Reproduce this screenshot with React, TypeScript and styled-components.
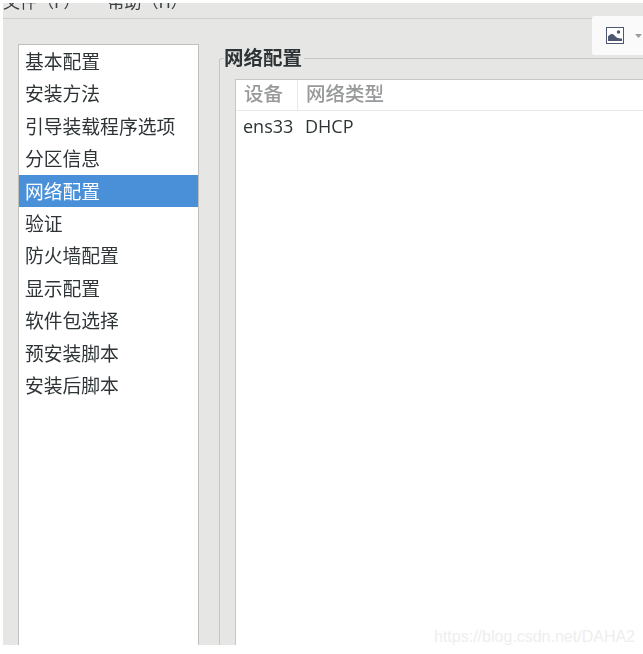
import React from "react";
import styled, { createGlobalStyle } from "styled-components";

const GlobalStyle = createGlobalStyle`
  html, body {
    margin: 0;
    padding: 0;
    background: #fff;
  }
  body {
    font-family: "Noto Sans CJK SC", "Noto Sans", sans-serif;
    color: #2e3436;
  }
`;

const Page = styled.div`
  position: relative;
  width: 643px;
  height: 654px;
  overflow: hidden;
  background: #fff;
`;

const Window = styled.div`
  position: relative;
  display: flex;
  flex-direction: column;
  margin: 3px 0 0 3px;
  width: 640px;
  height: 642px;
  overflow: hidden;
  background: #e6e6e4;
  filter: blur(0.4px);
`;

const MenuBar = styled.div`
  display: flex;
  align-items: flex-end;
  flex-shrink: 0;
  gap: 27px;
  height: 15px;
  border-bottom: 1px solid #cfcfcc;
  overflow: hidden;
`;

const MenuItem = styled.span`
  font-size: 17px;
  line-height: 22px;
  margin-bottom: 6px;
  white-space: nowrap;
  color: #3a3f41;
`;

const ImageButton = styled.div`
  position: absolute;
  top: 13px;
  right: 0;
  display: flex;
  align-items: center;
  gap: 11px;
  width: 51px;
  height: 39px;
  padding-left: 14px;
  box-sizing: border-box;
  background: #fafafa;
  border-radius: 2px 0 0 2px;
`;

const Body = styled.div`
  display: flex;
  flex: 1;
  min-height: 0;
  padding: 25px 0 0 15px;
`;

const Sidebar = styled.ul`
  flex-shrink: 0;
  width: 181px;
  margin: 0;
  padding: 0;
  list-style: none;
  background: #fff;
  border: 1px solid #bfc0bc;
  border-bottom: none;
  box-sizing: border-box;
`;

const SidebarItem = styled.li<{ $selected?: boolean }>`
  height: 32.4px;
  padding-left: 6px;
  font-size: 18.8px;
  line-height: 31px;
  white-space: nowrap;
  color: ${(p) => (p.$selected ? "#fff" : "#2e3436")};
  background: ${(p) => (p.$selected ? "#4a90d9" : "transparent")};
`;

const GroupBox = styled.section`
  position: relative;
  display: flex;
  flex: 1;
  min-width: 0;
  margin: 14px 0 0 20px;
  padding: 20px 0 0 15px;
  border-top: 1px solid #c6c7c3;
  border-left: 1px solid #c6c7c3;
  border-top-left-radius: 3px;
`;

const GroupTitle = styled.h2`
  position: absolute;
  top: -14px;
  left: 4px;
  margin: 0;
  padding-right: 2px;
  font-size: 19.5px;
  line-height: 24px;
  font-weight: 700;
  background: #e6e6e4;
  color: #2e3436;
`;

const TableFrame = styled.div`
  flex: 1;
  min-width: 0;
  background: #fff;
  border-top: 1px solid #c6c7c3;
  border-left: 1px solid #c6c7c3;
`;

const HeaderRow = styled.div`
  display: grid;
  grid-template-columns: 61px 1fr;
  height: 30px;
  border-bottom: 1px solid #e8e8e6;
`;

const HeaderCell = styled.div`
  padding-left: 8px;
  font-size: 19.5px;
  line-height: 25px;
  font-weight: 500;
  color: #97999a;
  & + & {
    border-left: 1px solid #e8e8e6;
  }
`;

const DataRow = styled.div`
  display: grid;
  grid-template-columns: 61px 1fr;
  height: 32px;
`;

const DataCell = styled.div`
  padding-left: 7px;
  font-family: "Open Sans", "Noto Sans", sans-serif;
  font-size: 18px;
  line-height: 31px;
  color: #2e3436;
  & + & {
    padding-left: 8px;
  }
`;

const Watermark = styled.div`
  position: absolute;
  right: 8px;
  bottom: 7px;
  font-family: "Liberation Sans", Arial, sans-serif;
  font-size: 16px;
  line-height: 20px;
  color: #eeeeee;
`;

const sections = [
  "基本配置",
  "安装方法",
  "引导装载程序选项",
  "分区信息",
  "网络配置",
  "验证",
  "防火墙配置",
  "显示配置",
  "软件包选择",
  "预安装脚本",
  "安装后脚本",
];

const PictureIcon = () => (
  <svg width="18" height="17" viewBox="0 0 18 17" aria-hidden="true">
    <rect x="0.5" y="0.5" width="17" height="16" fill="#fff" stroke="#4d5870" />
    <path
      d="M2 14V9.5C3.5 7.5 5.5 6.5 7.5 7.5C9 8.5 10 10.5 12 11C13.5 11.4 15 11.5 16 11.6V14Z"
      fill="#4d5870"
    />
    <circle cx="12.5" cy="5" r="1.7" fill="#4d5870" />
  </svg>
);

const CaretIcon = () => (
  <svg width="7" height="4" viewBox="0 0 7 4" aria-hidden="true">
    <path d="M0 0H7L3.5 4Z" fill="#9a9ca3" />
  </svg>
);

const App: React.FC = () => {
  return (
    <Page>
      <GlobalStyle />
      <Window>
        <MenuBar>
          <MenuItem>文件（F）</MenuItem>
          <MenuItem>帮助（H）</MenuItem>
        </MenuBar>
        <ImageButton>
          <PictureIcon />
          <CaretIcon />
        </ImageButton>
        <Body>
          <Sidebar>
            {sections.map((name) => (
              <SidebarItem key={name} $selected={name === "网络配置"}>
                {name}
              </SidebarItem>
            ))}
          </Sidebar>
          <GroupBox>
            <GroupTitle>网络配置</GroupTitle>
            <TableFrame>
              <HeaderRow>
                <HeaderCell>设备</HeaderCell>
                <HeaderCell>网络类型</HeaderCell>
              </HeaderRow>
              <DataRow>
                <DataCell>ens33</DataCell>
                <DataCell>DHCP</DataCell>
              </DataRow>
            </TableFrame>
          </GroupBox>
        </Body>
      </Window>
      <Watermark>https://blog.csdn.net/DAHA2</Watermark>
    </Page>
  );
};

export default App;
